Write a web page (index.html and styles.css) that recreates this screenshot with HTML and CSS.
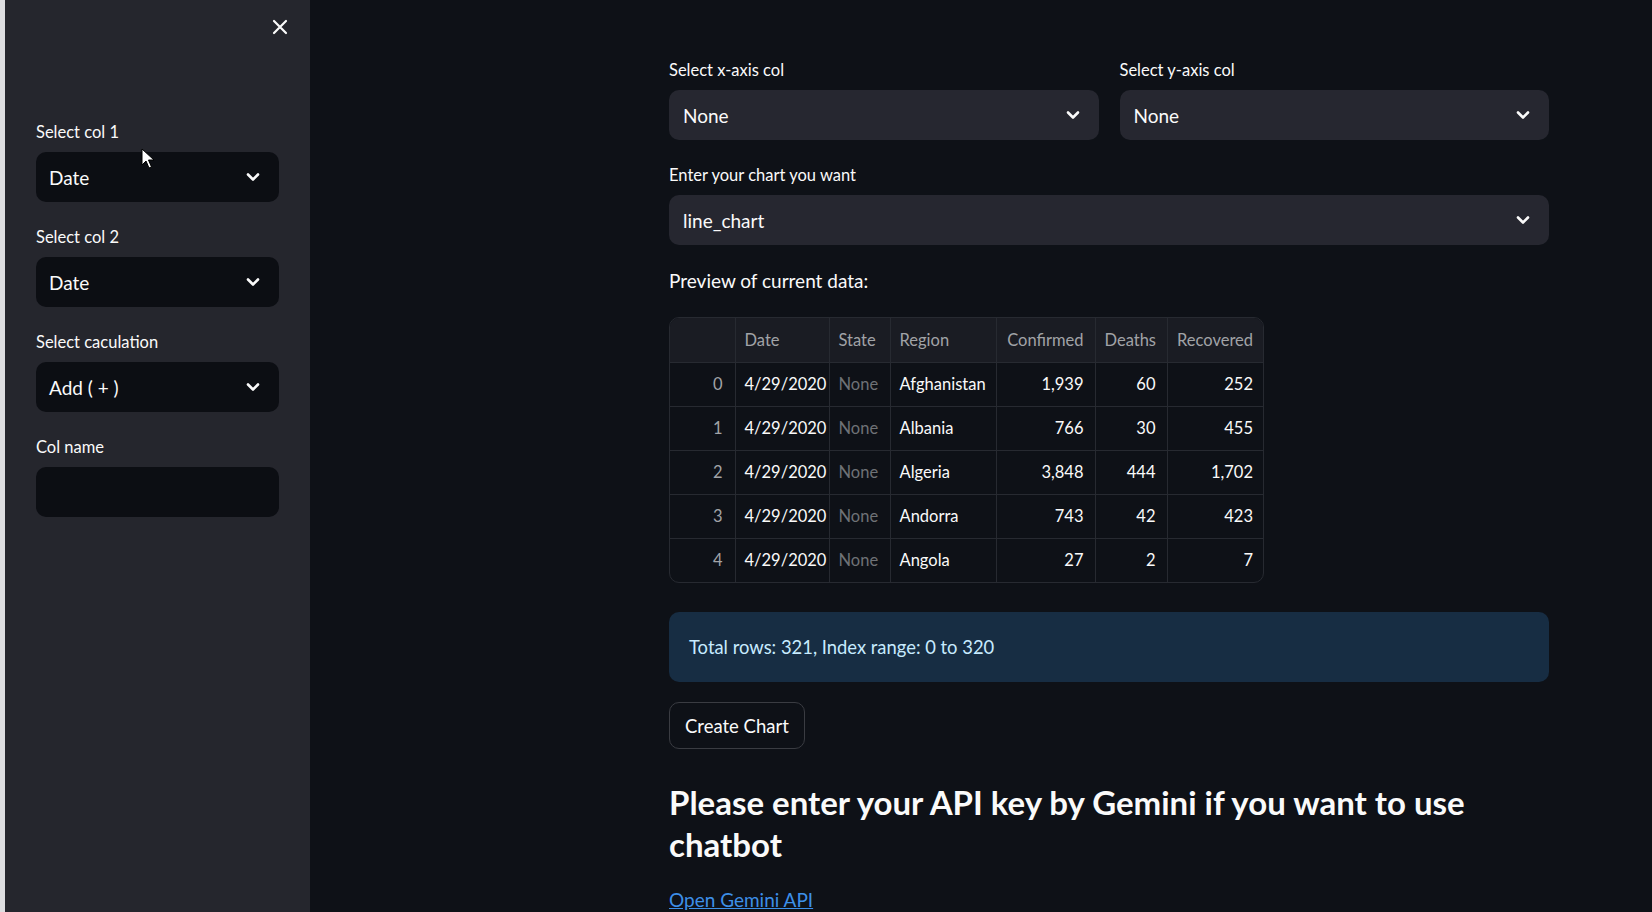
FILE: index.html
```html
<!DOCTYPE html>
<html lang="en">
<head>
<meta charset="utf-8">
<title>Chart builder</title>
<link rel="stylesheet" href="styles.css">
</head>
<body>
<div class="app">
  <div class="edge"></div>
  <aside class="sidebar">
    <div class="sidebar-header">
      <button class="close" aria-label="Close sidebar">
        <svg width="16" height="16" viewBox="0 0 16 16"><path d="M2 2 L14 14 M14 2 L2 14" stroke="#fafafa" stroke-width="2.2" stroke-linecap="round"/></svg>
      </button>
    </div>
    <div class="field">
      <div class="label">Select col 1</div>
      <div class="select dark"><span>Date</span><svg class="chev" width="14" height="10" viewBox="0 0 14 10"><path d="M2 2.5 L7 7.5 L12 2.5" fill="none" stroke="#fafafa" stroke-width="2.6" stroke-linecap="round" stroke-linejoin="round"/></svg></div>
    </div>
    <div class="field">
      <div class="label">Select col 2</div>
      <div class="select dark"><span>Date</span><svg class="chev" width="14" height="10" viewBox="0 0 14 10"><path d="M2 2.5 L7 7.5 L12 2.5" fill="none" stroke="#fafafa" stroke-width="2.6" stroke-linecap="round" stroke-linejoin="round"/></svg></div>
    </div>
    <div class="field">
      <div class="label">Select caculation</div>
      <div class="select dark"><span>Add ( + )</span><svg class="chev" width="14" height="10" viewBox="0 0 14 10"><path d="M2 2.5 L7 7.5 L12 2.5" fill="none" stroke="#fafafa" stroke-width="2.6" stroke-linecap="round" stroke-linejoin="round"/></svg></div>
    </div>
    <div class="field">
      <div class="label">Col name</div>
      <div class="select dark input"></div>
    </div>
  </aside>
  <main class="main">
    <div class="content">
      <div class="cols">
        <div class="field">
          <div class="label">Select x-axis col</div>
          <div class="select"><span>None</span><svg class="chev" width="14" height="10" viewBox="0 0 14 10"><path d="M2 2.5 L7 7.5 L12 2.5" fill="none" stroke="#fafafa" stroke-width="2.6" stroke-linecap="round" stroke-linejoin="round"/></svg></div>
        </div>
        <div class="field">
          <div class="label">Select y-axis col</div>
          <div class="select"><span>None</span><svg class="chev" width="14" height="10" viewBox="0 0 14 10"><path d="M2 2.5 L7 7.5 L12 2.5" fill="none" stroke="#fafafa" stroke-width="2.6" stroke-linecap="round" stroke-linejoin="round"/></svg></div>
        </div>
      </div>
      <div class="field">
        <div class="label">Enter your chart you want</div>
        <div class="select"><span>line_chart</span><svg class="chev" width="14" height="10" viewBox="0 0 14 10"><path d="M2 2.5 L7 7.5 L12 2.5" fill="none" stroke="#fafafa" stroke-width="2.6" stroke-linecap="round" stroke-linejoin="round"/></svg></div>
      </div>
      <p class="text">Preview of current data:</p>
      <div class="table-wrap">
        <table class="grid">
          <colgroup>
            <col class="c-idx"><col class="c-date"><col class="c-state"><col class="c-region"><col class="c-conf"><col class="c-deaths"><col class="c-rec">
          </colgroup>
          <thead>
            <tr><th></th><th>Date</th><th>State</th><th>Region</th><th>Confirmed</th><th>Deaths</th><th>Recovered</th></tr>
          </thead>
          <tbody>
            <tr><td class="idx">0</td><td>4/29/2020</td><td class="muted">None</td><td>Afghanistan</td><td class="num">1,939</td><td class="num">60</td><td class="num">252</td></tr>
            <tr><td class="idx">1</td><td>4/29/2020</td><td class="muted">None</td><td>Albania</td><td class="num">766</td><td class="num">30</td><td class="num">455</td></tr>
            <tr><td class="idx">2</td><td>4/29/2020</td><td class="muted">None</td><td>Algeria</td><td class="num">3,848</td><td class="num">444</td><td class="num">1,702</td></tr>
            <tr><td class="idx">3</td><td>4/29/2020</td><td class="muted">None</td><td>Andorra</td><td class="num">743</td><td class="num">42</td><td class="num">423</td></tr>
            <tr><td class="idx">4</td><td>4/29/2020</td><td class="muted">None</td><td>Angola</td><td class="num">27</td><td class="num">2</td><td class="num">7</td></tr>
          </tbody>
        </table>
      </div>
      <div class="info">Total rows: 321, Index range: 0 to 320</div>
      <button class="btn">Create Chart</button>
      <h3 class="heading">Please enter your API key by Gemini if you want to use chatbot</h3>
      <a class="link" href="#">Open Gemini API</a>
    </div>
  </main>
  <svg class="cursor" width="14" height="22" viewBox="0 0 14 22"><path d="M1 1 L1 17 L5 13 L8 20 L10.5 19 L7.5 12 L13 12 Z" fill="#ffffff" stroke="#000000" stroke-width="1"/></svg>
</div>
</body>
</html>
```

FILE: styles.css
```css
* { box-sizing: border-box; }

html, body {
  margin: 0;
  padding: 0;
  height: 100%;
}

body {
  background: #0e1117;
  color: #fafafa;
  font-family: Lato, "Noto Sans", "Liberation Sans", sans-serif;
  overflow: hidden;
}

.app {
  position: relative;
  display: flex;
  height: 912px;
  overflow: hidden;
}

.edge {
  width: 5px;
  flex: 0 0 5px;
  background: #dedee0;
}

.sidebar {
  flex: 0 0 305px;
  background: #25262d;
  padding: 0 31px;
}

.sidebar-header {
  display: flex;
  justify-content: flex-end;
  height: 117px;
  padding-top: 19px;
  margin-right: -9px;
}

.close {
  width: 16px;
  height: 16px;
  padding: 0;
  border: 0;
  background: transparent;
  display: flex;
}

.field {
  margin-bottom: 20px;
}

.label {
  height: 30px;
  line-height: 30px;
  font-size: 16.5px;
  margin-bottom: 5px;
  color: #fafafa;
}

.select {
  height: 50px;
  border-radius: 10px;
  background: #262730;
  display: flex;
  align-items: center;
  justify-content: space-between;
  padding: 0 19px 0 14px;
  font-size: 19px;
}

.select.dark {
  background: #0c0e13;
  padding-left: 13px;
}

.chev {
  flex: 0 0 auto;
}

.main {
  flex: 1 1 auto;
  padding: 55px 0 0 359px;
}

.content {
  width: 880px;
}

.cols {
  display: grid;
  grid-template-columns: 1fr 1fr;
  column-gap: 21px;
}

.text {
  margin: 0 0 20px;
  font-size: 19px;
  line-height: 32px;
}

.table-wrap {
  width: 595px;
  border: 1px solid #272a31;
  border-radius: 10px;
  overflow: hidden;
}

.grid {
  width: 100%;
  border-collapse: collapse;
  table-layout: fixed;
  font-size: 16.5px;
}

.c-idx { width: 65px; }
.c-date { width: 94px; }
.c-state { width: 61px; }
.c-region { width: 106px; }
.c-conf { width: 99px; }
.c-deaths { width: 72px; }
.c-rec { width: 97px; }

.grid th, .grid td {
  height: 44px;
  padding: 0 11px 0 9px;
  border-right: 1px solid #272a31;
  border-bottom: 1px solid #272a31;
  white-space: nowrap;
  overflow: hidden;
}

.grid th:last-child, .grid td:last-child { border-right: 0; }
.grid tbody tr:last-child td { border-bottom: 0; }

.grid th {
  background: #1a1c23;
  color: #a1a3a7;
  font-weight: 400;
  text-align: left;
}

.grid th:nth-child(n+5) { text-align: right; }

.grid td.idx {
  text-align: right;
  color: #a1a3a7;
  padding-right: 12px;
}

.grid td.num { text-align: right; }

.grid td.muted { color: #6f7276; }

.info {
  margin-top: 29px;
  height: 70px;
  padding: 0 20px;
  display: flex;
  align-items: center;
  background: #172d43;
  border-radius: 10px;
  color: #c7ebff;
  font-size: 18.4px;
}

.btn {
  display: block;
  margin-top: 20px;
  height: 47px;
  padding: 0 15px;
  background: #0e1117;
  border: 1px solid #3a3c42;
  border-radius: 10px;
  color: #fafafa;
  font-family: inherit;
  font-size: 18.5px;
}

.heading {
  margin: 32px 0 0;
  font-size: 33px;
  line-height: 42px;
  font-weight: 700;
  color: #fafafa;
}

.link {
  display: inline-block;
  margin-top: 19px;
  font-size: 19px;
  line-height: 32px;
  color: #3d8fe8;
  text-decoration: underline;
}

.cursor {
  position: absolute;
  left: 141px;
  top: 148px;
}
```
